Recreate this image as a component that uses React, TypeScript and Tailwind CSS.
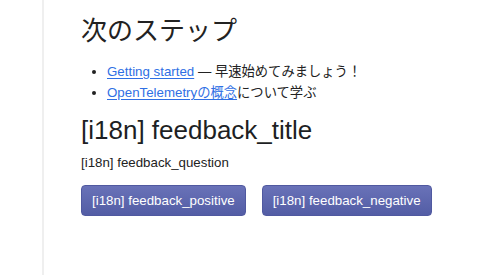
export default function App() {
  return (
    <div
      className="flex h-[275px] w-[500px] overflow-hidden bg-white text-[#222]"
      style={{ fontFamily: '"Liberation Sans", "Noto Sans CJK JP", sans-serif' }}
    >
      <div className="w-[44px] shrink-0 border-r-2 border-[#efefef]" />
      <main className="pl-[37px] pt-[16px]">
        <h2 className="text-[26px] font-normal leading-[31px]">次のステップ</h2>
        <ul className="mt-[14px] list-disc pl-[26px] text-[13.3px] leading-[21px] marker:text-[#222]">
          <li>
            <a href="#" className="text-[#2f6fe4] underline underline-offset-2">
              Getting started
            </a>{' '}
            — 早速始めてみましょう！
          </li>
          <li>
            <a href="#" className="text-[#2f6fe4] underline underline-offset-2">
              OpenTelemetryの概念
            </a>
            について学ぶ
          </li>
        </ul>
        <h2 className="mt-[12px] text-[26px] font-medium leading-[31px] text-[#1d1f24]">
          [i18n] feedback_title
        </h2>
        <p className="mt-[8px] text-[13.3px] leading-[18px]">[i18n] feedback_question</p>
        <div className="mt-[13px] flex gap-[16px]">
          <button className="rounded-[4px] border border-[#5059a0] bg-gradient-to-b from-[#6972b8] to-[#535da5] px-[10px] py-[6px] text-[13.3px] leading-[17px] text-white">
            [i18n] feedback_positive
          </button>
          <button className="rounded-[4px] border border-[#5059a0] bg-gradient-to-b from-[#6972b8] to-[#535da5] px-[10px] py-[6px] text-[13.3px] leading-[17px] text-white">
            [i18n] feedback_negative
          </button>
        </div>
      </main>
    </div>
  )
}
